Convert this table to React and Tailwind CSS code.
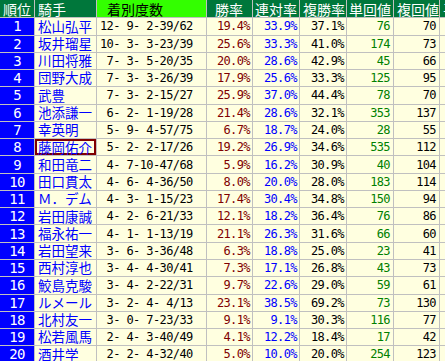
const rows = [
  ['松山弘平', '12- 9- 2-39/62', '19.4%', '33.9%', '37.1%', '76', '70'],
  ['坂井瑠星', '10- 3- 3-23/39', '25.6%', '33.3%', '41.0%', '174', '73'],
  ['川田将雅', ' 7- 3- 5-20/35', '20.0%', '28.6%', '42.9%', '45', '66'],
  ['団野大成', ' 7- 3- 3-26/39', '17.9%', '25.6%', '33.3%', '125', '95'],
  ['武豊', ' 7- 3- 2-15/27', '25.9%', '37.0%', '44.4%', '78', '70'],
  ['池添謙一', ' 6- 2- 1-19/28', '21.4%', '28.6%', '32.1%', '353', '137'],
  ['幸英明', ' 5- 9- 4-57/75', '6.7%', '18.7%', '24.0%', '28', '55'],
  ['藤岡佑介', ' 5- 2- 2-17/26', '19.2%', '26.9%', '34.6%', '535', '112'],
  ['和田竜二', ' 4- 7-10-47/68', '5.9%', '16.2%', '30.9%', '40', '104'],
  ['田口貫太', ' 4- 6- 4-36/50', '8.0%', '20.0%', '28.0%', '183', '114'],
  ['Ｍ．デム', ' 4- 3- 1-15/23', '17.4%', '30.4%', '34.8%', '150', '94'],
  ['岩田康誠', ' 4- 2- 6-21/33', '12.1%', '18.2%', '36.4%', '76', '86'],
  ['福永祐一', ' 4- 1- 1-13/19', '21.1%', '26.3%', '31.6%', '66', '60'],
  ['岩田望来', ' 3- 6- 3-36/48', '6.3%', '18.8%', '25.0%', '23', '41'],
  ['西村淳也', ' 3- 4- 4-30/41', '7.3%', '17.1%', '26.8%', '43', '73'],
  ['鮫島克駿', ' 3- 4- 2-22/31', '9.7%', '22.6%', '29.0%', '59', '61'],
  ['ルメール', ' 3- 2- 4- 4/13', '23.1%', '38.5%', '69.2%', '73', '130'],
  ['北村友一', ' 3- 0- 7-23/33', '9.1%', '9.1%', '30.3%', '116', '77'],
  ['松若風馬', ' 2- 4- 3-40/49', '4.1%', '12.2%', '18.4%', '17', '42'],
  ['酒井学', ' 2- 2- 4-32/40', '5.0%', '10.0%', '20.0%', '254', '123'],
]

const jp = "font-['Noto_Sans_CJK_JP',sans-serif] whitespace-nowrap"
const mono = "font-['DejaVu_Sans_Mono',monospace] text-[12px] tracking-[-0.6px]"
const head = `flex items-center bg-[#00773b] text-white text-[14px] leading-none ${jp}`
const cell = 'flex items-center bg-[#ffffe0] leading-none'

export default function App() {
  return (
    <div className="w-[445px] h-[361px] overflow-hidden bg-white">
      <div className="w-[484px] grid grid-cols-[34px_61px_109px_45px_46px_46px_46px_45px_44px] grid-rows-[17.3px_repeat(20,16.28px)] gap-px bg-[#c0c0c0] border-l-2 border-[#1a1a40] -ml-[2px]">
        <div className={`${head} pl-[3px]`}>順位</div>
        <div className={`${head} pl-[3px]`}>騎手</div>
        <div className={`flex items-center bg-[#33ff00] text-black text-[14px] leading-none pl-[10px] ${jp}`}>着別度数</div>
        <div className={`${head} pl-[8px]`}>勝率</div>
        <div className={`${head} pl-[2px]`}>連対率</div>
        <div className={`${head} pl-[3px]`}>複勝率</div>
        <div className={`${head} pl-[2px]`}>単回値</div>
        <div className={`${head} pl-[3px]`}>複回値</div>
        <div className={`${head} pl-[3px]`}>平均</div>

        {rows.map(([name, rec, win, ren, fuku, tan, fkv], i) => (
          <div key={name} className="contents">
            <div className="flex items-center justify-center bg-[#0000ff] text-white leading-none font-['DejaVu_Sans_Mono',monospace] text-[14px] tracking-[-0.8px]">{i + 1}</div>
            <div className={`${cell} pl-[3px] text-[#0000ff] text-[13.5px] ${jp} ${i === 7 ? 'shadow-[inset_0_0_0_2px_#800000]' : ''}`}>{name}</div>
            <div className={`${cell} pl-[3px] text-black whitespace-pre ${mono}`}>{rec}</div>
            <div className={`${cell} justify-end pr-[2px] text-[#800000] ${mono}`}>{win}</div>
            <div className={`${cell} justify-end pr-[2px] text-[#0000ff] ${mono}`}>{ren}</div>
            <div className={`${cell} justify-end pr-[2px] text-black ${mono}`}>{fuku}</div>
            <div className={`${cell} justify-end pr-[3px] text-[#008000] ${mono}`}>{tan}</div>
            <div className={`${cell} justify-end pr-[3px] text-black ${mono}`}>{fkv}</div>
            <div className={cell}></div>
          </div>
        ))}
      </div>
    </div>
  )
}
